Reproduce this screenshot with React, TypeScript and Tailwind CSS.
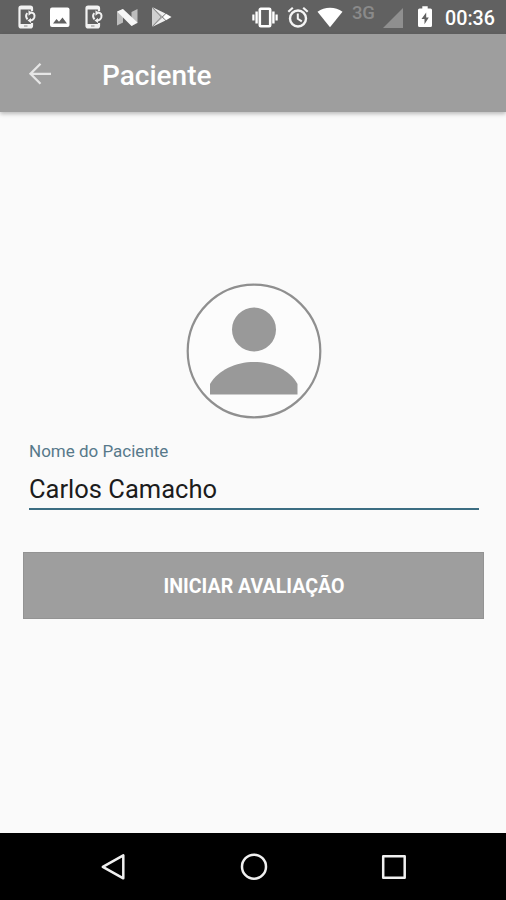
import { useState } from 'react';

const PhoneSyncIcon = ({ className = '' }: { className?: string }) => (
  <svg viewBox="0 0 24 24" className={`h-6 w-6 shrink-0 ${className}`} fill="none" stroke="#f2f2f2">
    <path d="M17 6V3.2Q17 1.5 15.3 1.5H6.2Q4.5 1.5 4.5 3.2v17.600Q4.500 22.500 6.200 22.500h9.100Q17 22.500 17 20.800V18" strokeWidth="2.200" />
    <path d="M5 3h12M5 20.500h12" strokeWidth="3" />
    <path d="M9 21h3.500" stroke="#8a8a8a" strokeWidth="1" />
    <path d="M12.300 8.200Q9.800 11 12.500 14.300M15.500 7.300Q20.500 8 19.300 12.500Q18.300 15.500 14.800 15.500" strokeWidth="2" />
    <path d="M13.500 5.200v5.500l3.500-2.700zM16 18v-5l-3.500 2.500z" fill="#f2f2f2" stroke="none" />
  </svg>
);

const PictureIcon = () => (
  <svg viewBox="0 0 24 24" className="ml-[9px] h-6 w-6 shrink-0">
    <rect x="2" y="2.500" width="19.500" height="19.500" rx="2" fill="#fff" />
    <path d="M5 18.500l3.500-4.500 2.500 2.700 3.500-4.200 4.500 6z" fill="#616161" />
  </svg>
);

const NougatIcon = () => (
  <svg viewBox="0 0 24 24" className="ml-[9px] h-6 w-6 shrink-0">
    <path d="M2 7l6-3v13.500l-6 3zM16.500 7L22.500 4v14l-6 3z" fill="#bdbdbd" />
    <path d="M2 6.500L8 4l14.500 13.500-6 3.500z" fill="#f7f7f7" />
  </svg>
);

const PlayStoreIcon = () => (
  <svg viewBox="0 0 24 24" className="ml-[11px] h-6 w-6 shrink-0">
    <path d="M2 2.500v19l9-9.500z" fill="#d0d0d0" />
    <path d="M2.500 2.300l13 6.200-3.700 3.500zM2.500 21.700l13-6.200-3.700-3.500z" fill="#f0f0f0" />
    <path d="M16 8.700l5.500 3.300-5.500 3.300-3.200-3.300z" fill="#fff" />
    <path d="M2.500 2.500l10 9.500-10 9.500" fill="none" stroke="#8c8c8c" strokeWidth=".8" />
  </svg>
);

const VibrateIcon = () => (
  <svg viewBox="0 0 28 24" className="h-6 w-7 shrink-0" fill="none" stroke="#fff">
    <rect x="8.800" y="3.800" width="10.400" height="17.400" rx="1" strokeWidth="2.600" />
    <path d="M5.600 6.500v12M22.400 6.500v12" strokeWidth="2.400" />
    <path d="M2.400 9.500v6M25.600 9.500v6" strokeWidth="2.200" />
  </svg>
);

const AlarmIcon = () => (
  <svg viewBox="0 0 24 24" className="ml-[7px] h-6 w-6 shrink-0" fill="none" stroke="#f5f5f5">
    <circle cx="12" cy="13.500" r="8" strokeWidth="2.400" />
    <path d="M2.300 6.700l4.500-4M21.700 6.700l-4.500-4" strokeWidth="2.200" />
    <path d="M11.800 8.500v5.300l4 2.600" strokeWidth="2" />
  </svg>
);

const WifiIcon = () => (
  <svg viewBox="0 0 26 24" className="ml-[7px] h-6 w-[26px] shrink-0">
    <path d="M.5 6.800Q6 2.800 13 2.800t12.500 4L13 22.300z" fill="#fff" />
  </svg>
);

const SignalIcon = () => (
  <svg viewBox="0 0 20 24" className="ml-[6px] h-6 w-5 shrink-0">
    <path d="M20 3v20H0z" fill="#8f8f8f" />
  </svg>
);

const BatteryIcon = () => (
  <svg viewBox="0 0 14 24" className="ml-[15px] h-6 w-3.5 shrink-0">
    <path d="M4.300 1.200h5.400v2.300h2.800Q14 3.500 14 5v15.500q0 1.500-1.500 1.500h-11Q0 22 0 20.500V5q0-1.500 1.500-1.500h2.800z" fill="#fff" />
    <path d="M8.200 7.500L3.500 14h3v5.200l4.300-6.700H8.200z" fill="#616161" />
  </svg>
);

const StatusBar = () => (
  <div className="flex h-[34px] items-start bg-[#616161] pt-[5px] pr-[10px] pl-[15px]">
    <PhoneSyncIcon />
    <PictureIcon />
    <PhoneSyncIcon className="ml-[10px]" />
    <NougatIcon />
    <PlayStoreIcon />
    <div className="ml-auto flex items-start">
      <VibrateIcon />
      <AlarmIcon />
      <WifiIcon />
      <span className="-mt-px ml-[9px] w-[25px] text-[18.500px] leading-[18px] font-medium tracking-[-0.2px] text-[#8a8a8a]">3G</span>
      <SignalIcon />
      <BatteryIcon />
      <span className="ml-[13px] w-[51px] text-[19.700px] leading-[27px] font-medium whitespace-nowrap text-white">00:36</span>
    </div>
  </div>
);

const AppBar = ({ title }: { title: string }) => (
  <header className="z-10 flex h-[78px] items-center bg-[#9e9e9e] pl-7 shadow-[0_2px_4px_rgba(0,0,0,0.25)]">
    <button aria-label="Voltar" className="flex h-6 w-6 items-center justify-center">
      <svg viewBox="0 0 24 24" className="h-6 w-6" fill="none" stroke="#e6e6e6" strokeWidth="2.300">
        <path d="M23 12.800H2.500M12.500 2.800l-10 10 10 10" />
      </svg>
    </button>
    <h1 className="ml-[50px] pt-1.5 text-[28px] leading-8 font-medium text-white">{title}</h1>
  </header>
);

const Avatar = () => (
  <svg viewBox="0 0 136 136" className="ml-px h-[136px] w-[136px]">
    <circle cx="68" cy="68" r="66.300" fill="#fcfcfc" stroke="#8f8f8f" strokeWidth="2.200" />
    <circle cx="68" cy="46.500" r="22" fill="#999" />
    <path d="M24 111.500V101C32 87 50 79 68 79s36 8 43.500 22v10.500z" fill="#999" />
  </svg>
);

const NavBar = () => (
  <nav className="flex h-[67px] items-center justify-between bg-black pr-[99px] pl-[100px]">
    <svg viewBox="0 0 28 28" className="h-7 w-7" fill="none" stroke="#f0f0f0" strokeWidth="2.500" strokeLinejoin="round">
      <path d="M23.300 2.300v23L2.800 13.800z" />
    </svg>
    <svg viewBox="0 0 28 28" className="h-7 w-7" fill="none" stroke="#f0f0f0" strokeWidth="2.500">
      <circle cx="14" cy="13.700" r="12" />
    </svg>
    <svg viewBox="0 0 28 28" className="h-7 w-7" fill="none" stroke="#f0f0f0" strokeWidth="2.500" strokeLinejoin="round">
      <rect x="4.200" y="3.200" width="21.500" height="21.500" />
    </svg>
  </nav>
);

export default function App() {
  const [name, setName] = useState('Carlos Camacho');

  return (
    <div className="flex h-[900px] w-[506px] flex-col overflow-hidden bg-[#fafafa] font-[Roboto,sans-serif]">
      <StatusBar />
      <AppBar title="Paciente" />

      <main className="flex flex-1 flex-col items-center pt-[171px]">
        <Avatar />

        <div className="mt-[22px] ml-[2px] flex w-[450px] flex-col">
          <label htmlFor="nome" className="text-[17px] leading-5 text-[#57798a]">Nome do Paciente</label>
          <input
            id="nome"
            value={name}
            onChange={(e) => setName(e.target.value)}
            className="mt-2 h-[41px] border-b-2 border-[#3c6d82] bg-transparent pt-px text-[25.500px] text-[#1c1c1c] outline-none"
          />
        </div>

        <button className="mt-[42px] h-[67px] w-[461px] border border-[#939393] bg-[#9e9e9e] pt-0.5 pl-0.5 text-[19.600px] font-bold text-white">
          INICIAR AVALIAÇÃO
        </button>
      </main>

      <NavBar />
    </div>
  );
}
